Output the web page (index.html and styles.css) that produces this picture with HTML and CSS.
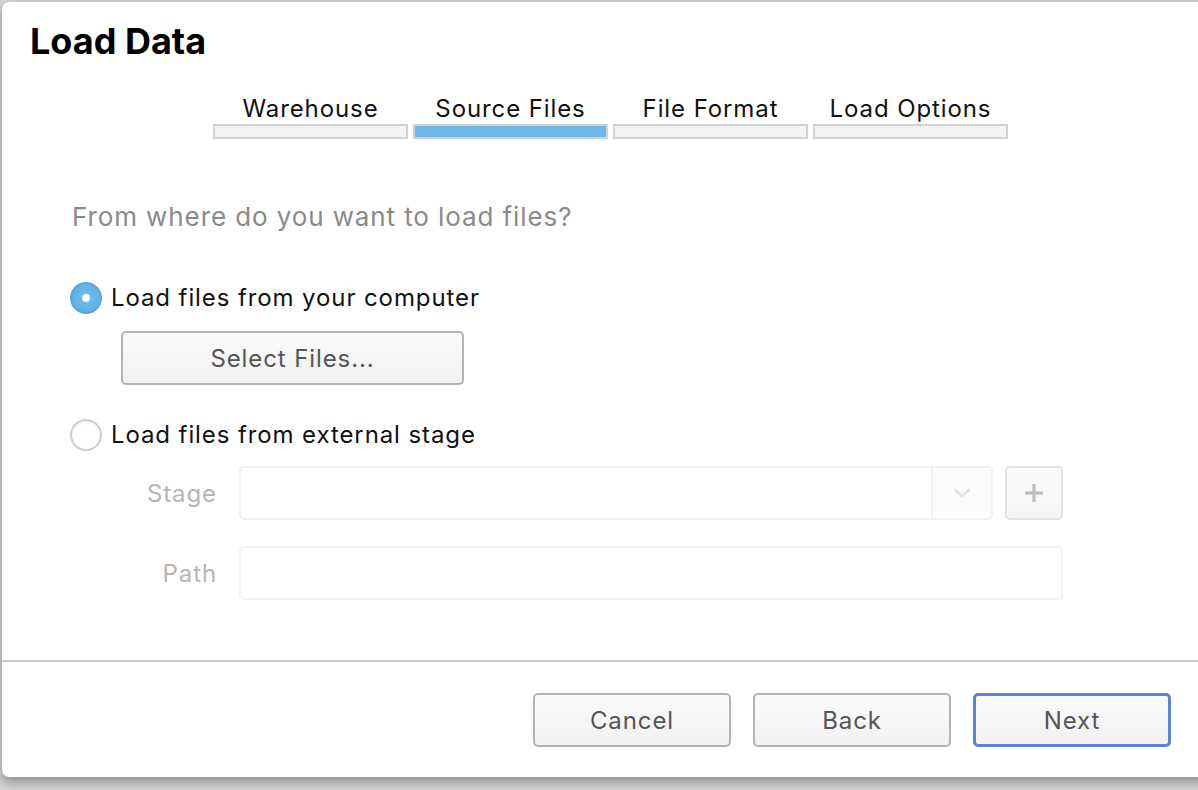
FILE: index.html
```html
<!DOCTYPE html>
<html>
<head>
<meta charset="utf-8">
<link rel="stylesheet" href="styles.css">
</head>
<body>
<div class="dialog">
  <div class="header">
    <h1 class="title">Load Data</h1>
  </div>
  <div class="steps">
    <div class="step"><div class="step-label">Warehouse</div><div class="step-bar"></div></div>
    <div class="step"><div class="step-label">Source Files</div><div class="step-bar active"></div></div>
    <div class="step"><div class="step-label">File Format</div><div class="step-bar"></div></div>
    <div class="step"><div class="step-label">Load Options</div><div class="step-bar"></div></div>
  </div>
  <div class="content">
    <div class="question">From where do you want to load files?</div>
    <div class="radio-row first">
      <span class="radio checked"></span>
      <span class="radio-label">Load files from your computer</span>
    </div>
    <button class="btn select-btn">Select Files...</button>
    <div class="radio-row second">
      <span class="radio"></span>
      <span class="radio-label">Load files from external stage</span>
    </div>
    <div class="field-row stage-row">
      <span class="field-label">Stage</span>
      <div class="select-box">
        <div class="select-value"></div>
        <div class="select-arrow">
          <svg width="18" height="10" viewBox="0 0 18 10"><path d="M2 2 L9 8 L16 2" fill="none" stroke="#e2e2e2" stroke-width="2.4" stroke-linecap="round" stroke-linejoin="round"/></svg>
        </div>
      </div>
      <div class="plus-btn">
        <svg width="22" height="22" viewBox="0 0 22 22"><path d="M11 2 V20 M2 11 H20" stroke="#bdbdbd" stroke-width="3.2"/></svg>
      </div>
    </div>
    <div class="field-row path-row">
      <span class="field-label">Path</span>
      <div class="text-input"></div>
    </div>
  </div>
  <div class="separator"></div>
  <div class="footer">
    <button class="btn footer-btn">Cancel</button>
    <button class="btn footer-btn">Back</button>
    <button class="btn footer-btn primary">Next</button>
  </div>
</div>
</body>
</html>
```
FILE: styles.css
```css
html, body {
  margin: 0;
  padding: 0;
  overflow: hidden;
  width: 1198px;
  height: 790px;
}
body {
  background: #d4d4d4;
  font-family: Inter, "Noto Sans", "Liberation Sans", sans-serif;
  color: #111;
  letter-spacing: 0.9px;
}
.dialog {
  margin: 2px 0 0 2px;
  width: 1206px;
  height: 775px;
  background: #fff;
  border-radius: 7px 0 0 7px;
  box-shadow: 0 5px 12px rgba(0, 0, 0, 0.35);
  box-sizing: border-box;
}
.header {
  padding: 17px 0 0 28px;
}
.title {
  margin: 0;
  font-size: 36px;
  line-height: 44px;
  font-weight: 700;
  color: #000;
  letter-spacing: 0;
}
.steps {
  display: flex;
  gap: 5px;
  margin: 32px 0 0 211px;
}
.step {
  width: 195px;
  display: flex;
  flex-direction: column;
  align-items: stretch;
}
.step-label {
  text-align: center;
  font-size: 24px;
  line-height: 28px;
  color: #111;
}
.step-bar {
  margin-top: 1px;
  height: 11px;
  border: 2px solid #d2d2d2;
  background: #f3f3f3;
}
.step-bar.active {
  background: #6cb8ec;
}
.content {
  padding-left: 68px;
}
.question {
  margin: 63px 0 0 2px;
  font-size: 26px;
  line-height: 30px;
  color: #8a8a8a;
}
.radio-row {
  display: flex;
  align-items: center;
  gap: 9px;
  height: 32px;
}
.radio-row.first { margin-top: 50px; }
.radio-row.second { margin-top: 34px; }
.radio {
  width: 32px;
  height: 32px;
  border-radius: 50%;
  box-sizing: border-box;
  border: 2px solid #cdcdcd;
  background: #fff;
  box-shadow: inset 0 1px 2px rgba(0, 0, 0, 0.08);
  display: flex;
  align-items: center;
  justify-content: center;
}
.radio.checked {
  border: 2px solid #55a8dc;
  background: radial-gradient(circle, #6dbbeb 0%, #62b3e6 70%, #5aa9dc 100%);
  box-shadow: none;
}
.radio.checked::after {
  content: "";
  width: 8px;
  height: 8px;
  border-radius: 50%;
  background: #fff;
}
.radio-label {
  font-size: 24px;
  line-height: 28px;
  color: #111;
}
.btn {
  font-family: Inter, "Noto Sans", "Liberation Sans", sans-serif;
  font-size: 24px;
  letter-spacing: 0.9px;
  color: #555;
  background: linear-gradient(#fafafa, #f2f2f2);
  border: 2px solid #b4b4b4;
  border-radius: 5px;
  box-sizing: border-box;
  padding: 0;
  cursor: default;
}
.select-btn {
  display: block;
  margin: 17px 0 0 51px;
  width: 343px;
  height: 54px;
}
.field-row {
  display: flex;
  align-items: center;
  height: 54px;
}
.stage-row { margin-top: 15px; }
.path-row { margin-top: 26px; }
.field-label {
  width: 147px;
  margin-right: 22px;
  text-align: right;
  font-size: 24px;
  color: #b5b5b5;
}
.select-box {
  width: 754px;
  height: 54px;
  box-sizing: border-box;
  border: 2px solid #f1f1f1;
  border-radius: 5px;
  display: flex;
}
.select-value { flex: 1; }
.select-arrow {
  width: 58px;
  border-left: 2px solid #f1f1f1;
  background: #fcfcfc;
  display: flex;
  align-items: center;
  justify-content: center;
  border-radius: 0 4px 4px 0;
}
.plus-btn {
  margin-left: 12px;
  width: 58px;
  height: 54px;
  box-sizing: border-box;
  border: 2px solid #e3e3e3;
  border-radius: 5px;
  background: linear-gradient(#fbfbfb, #f5f5f5);
  display: flex;
  align-items: center;
  justify-content: center;
}
.text-input {
  width: 824px;
  height: 54px;
  box-sizing: border-box;
  border: 2px solid #f3f3f3;
  border-radius: 5px;
}
.separator {
  margin-top: 60px;
  height: 2px;
  background: #cccccc;
}
.footer {
  display: flex;
  justify-content: flex-end;
  gap: 22px;
  padding: 31px 37px 0 0;
}
.footer-btn {
  width: 198px;
  height: 54px;
}
.footer-btn.primary {
  border: 3px solid #5b86d6;
}
```
